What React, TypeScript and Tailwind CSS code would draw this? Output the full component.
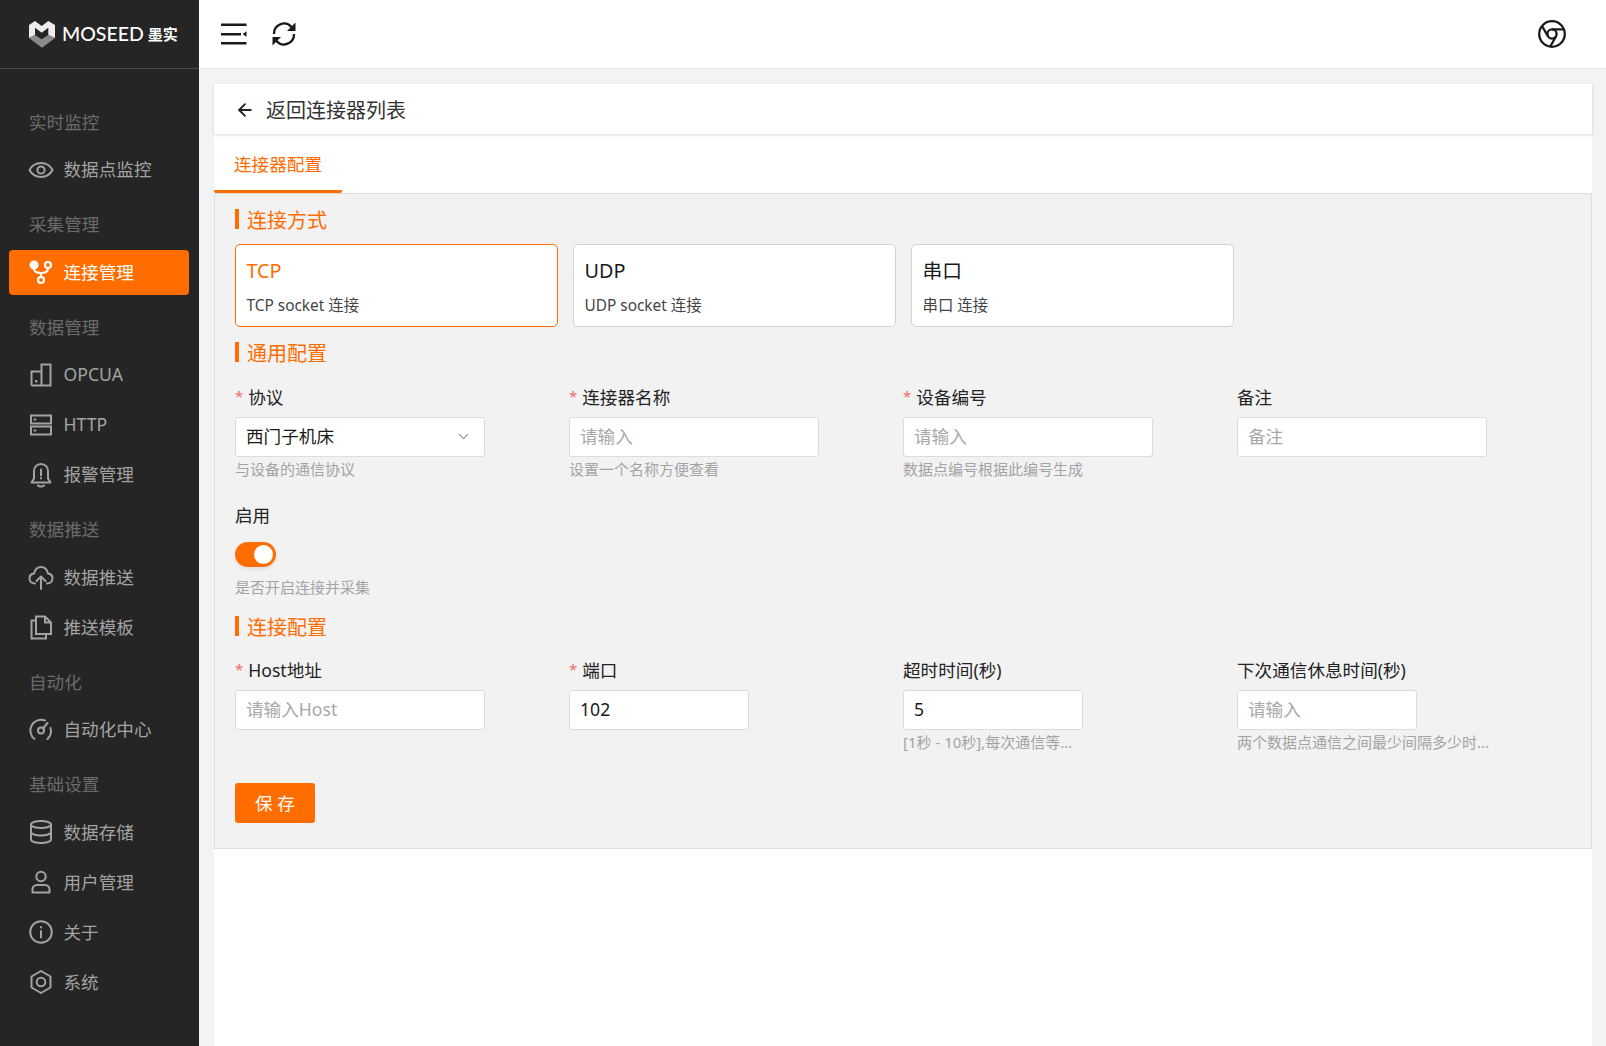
import { ChevronDown, ArrowLeft } from 'lucide-react'
import type { ReactNode } from 'react'

const ic = {
  fill: 'none',
  stroke: 'currentColor',
  strokeWidth: 2,
  strokeLinecap: 'round' as const,
  strokeLinejoin: 'round' as const,
}

const icons: Record<string, ReactNode> = {
  eye: (
    <svg width="26" height="26" viewBox="0 0 26 26" {...ic}>
      <path d="M1.5 13C4 8.300 8 6 13 6s9 2.300 11.500 7C22 17.700 18 20 13 20S4 17.700 1.500 13Z" />
      <circle cx="13" cy="13" r="3.600" />
    </svg>
  ),
  link: (
    <svg width="26" height="26" viewBox="0 0 26 26" fill="none" stroke="currentColor" strokeWidth="2.200">
      <circle cx="6" cy="6" r="3.400" fill="currentColor" />
      <circle cx="20" cy="6" r="3" />
      <circle cx="13" cy="21" r="3" />
      <path d="M6 9c0 4 2 5 7 5s7-2 7-5M13 14v4" />
    </svg>
  ),
  opcua: (
    <svg width="26" height="26" viewBox="0 0 26 26" {...ic} strokeLinejoin="miter" strokeLinecap="butt">
      <path d="M3.500 23.500v-14l10-.01v14h-10ZM13.500 9.500v-7h9v21h-9" />
      <rect x="7" y="18" width="2.400" height="2.400" fill="currentColor" stroke="none" />
    </svg>
  ),
  http: (
    <svg width="26" height="26" viewBox="0 0 26 26" {...ic} strokeLinejoin="miter">
      <rect x="3" y="3.500" width="20" height="8" />
      <rect x="3" y="14.500" width="20" height="8" />
      <path d="M6.500 7.500h1M6.500 18.500h1" />
    </svg>
  ),
  bell: (
    <svg width="26" height="26" viewBox="0 0 26 26" {...ic}>
      <path d="M13 2c-4.500 0-7 3.300-7 7.500v7L3.500 20.500h19L20 16.500v-7C20 5.300 17.500 2 13 2Z" />
      <path d="M10 23.500c1.500 1.300 4.500 1.300 6 0M13 7.500v6M13 16v.6" />
    </svg>
  ),
  cloud: (
    <svg width="26" height="26" viewBox="0 0 26 26" {...ic}>
      <path d="M7 19.500c-3.500 0-5.500-2.200-5.500-5 0-2.700 2-4.700 4.500-5C7 5.500 9.700 3 13 3s6 2.500 7 6.500c2.500.3 4.500 2.300 4.500 5 0 2.800-2 5-5.500 5" />
      <path d="M13 25V12.500M8.500 17l4.500-4.500 4.500 4.500" />
    </svg>
  ),
  file: (
    <svg width="26" height="26" viewBox="0 0 26 26" {...ic} strokeLinejoin="miter" strokeLinecap="butt">
      <path d="M8 2.500h9l6 6v11.500H8V2.500ZM17 2.500v6h6" />
      <path d="M8 6.500H3.500v18H18V20" />
    </svg>
  ),
  gauge: (
    <svg width="26" height="26" viewBox="0 0 26 26" {...ic}>
      <path d="M17 3.400A10.800 10.800 0 0 0 6.500 22M19.500 22a10.800 10.800 0 0 0 3-11" />
      <circle cx="13" cy="13.500" r="3" />
      <path d="M15 11.500l4.500-5.500" />
    </svg>
  ),
  db: (
    <svg width="26" height="26" viewBox="0 0 26 26" {...ic}>
      <ellipse cx="13" cy="5.500" rx="10" ry="3.500" />
      <path d="M3 5.500v15c0 2 4.500 3.500 10 3.500s10-1.500 10-3.500v-15M3 13c0 2 4.500 3.500 10 3.500S23 15 23 13" />
    </svg>
  ),
  user: (
    <svg width="26" height="26" viewBox="0 0 26 26" {...ic}>
      <circle cx="13" cy="7.500" r="4.700" />
      <path d="M4.500 23.500v-3c0-2.500 2-4.500 4.500-4.500h8c2.500 0 4.500 2 4.500 4.500v3H4.500Z" />
    </svg>
  ),
  info: (
    <svg width="26" height="26" viewBox="0 0 26 26" {...ic}>
      <circle cx="13" cy="13" r="10.800" />
      <path d="M13 12v6.500M13 8v.5" />
    </svg>
  ),
  cog: (
    <svg width="26" height="26" viewBox="0 0 26 26" {...ic}>
      <path d="M13 2l9.500 5.500v11L13 24l-9.500-5.500v-11L13 2Z" />
      <circle cx="13" cy="13" r="4.300" />
    </svg>
  ),
}

const menu = [
  { title: '实时监控', items: [{ icon: 'eye', label: '数据点监控' }] },
  { title: '采集管理', items: [{ icon: 'link', label: '连接管理', active: true }] },
  {
    title: '数据管理',
    items: [
      { icon: 'opcua', label: 'OPCUA' },
      { icon: 'http', label: 'HTTP' },
      { icon: 'bell', label: '报警管理' },
    ],
  },
  {
    title: '数据推送',
    items: [
      { icon: 'cloud', label: '数据推送' },
      { icon: 'file', label: '推送模板' },
    ],
  },
  { title: '自动化', items: [{ icon: 'gauge', label: '自动化中心' }] },
  {
    title: '基础设置',
    items: [
      { icon: 'db', label: '数据存储' },
      { icon: 'user', label: '用户管理' },
      { icon: 'info', label: '关于' },
      { icon: 'cog', label: '系统' },
    ],
  },
]

function Logo() {
  return (
    <div className="flex items-center">
      <svg width="26" height="27" viewBox="0 0 26 27" className="mr-[7px]">
        <path d="M0 4l6-4 6.700 5 6.600-5L26 4v13l-6.700-3V6.700l-6.600 5-6.700-5V14L0 17V4Z" fill="#ececec" />
        <path d="M0 17l6-3 6.700 4.300L19.300 14l6.700 3-13 9.700L0 17Z" fill="#8a8a8a" />
      </svg>
      <span className="text-[19.5px] leading-none text-white font-medium font-['Lato',sans-serif]">MOSEED</span>
      <span className="ml-[4px] text-[15px] leading-none text-white font-bold">墨实</span>
    </div>
  )
}

function Sidebar() {
  return (
    <aside className="w-[199px] shrink-0 bg-[#252525] flex flex-col">
      <div className="h-[69px] shrink-0 border-b border-[#4a4a4a] pl-[29px] flex items-center">
        <Logo />
      </div>
      <nav className="pt-[20.5px]">
        {menu.map((g) => (
          <div key={g.title} className="mt-[10.5px]">
            <div className="h-[44px] mb-[3px] pl-[29px] flex items-center text-[17.6px] text-[#6b6b6b]">{g.title}</div>
            {g.items.map((it) => (
              <div
                key={it.label}
                className={
                  it.active
                    ? 'ml-[9px] w-[180px] h-[45px] mb-[5px] rounded-[4px] bg-[#ff6d00] text-white flex items-center pl-[19px] gap-[9.5px] text-[17.6px]'
                    : 'ml-[9px] w-[180px] h-[45px] mb-[5px] rounded-[4px] text-[#a3a3a3] flex items-center pl-[19px] gap-[9.5px] text-[17.6px]'
                }
              >
                {icons[it.icon]}
                <span>{it.label}</span>
              </div>
            ))}
          </div>
        ))}
      </nav>
    </aside>
  )
}

function SectionTitle({ children }: { children: ReactNode }) {
  return (
    <div className="h-[20px] flex items-center border-l-[4px] border-[#ff6d00] pl-[8px] pt-[3px] text-[20px] text-[#ff6d00]">
      {children}
    </div>
  )
}

function ConnCard({ title, desc, active }: { title: string; desc: string; active?: boolean }) {
  return (
    <div
      className={
        active
          ? 'w-[322.5px] h-[83px] bg-white rounded-[5px] border border-[#ff6d00] pl-[10.5px]'
          : 'w-[322.5px] h-[83px] bg-white rounded-[5px] border border-[#d0d2da] pl-[10.5px]'
      }
    >
      <div className={active ? 'mt-[12px] h-[28px] leading-[28px] text-[19.8px] text-[#ff6d00]' : 'mt-[12px] h-[28px] leading-[28px] text-[19.8px] text-[#1a1a1a]'}>
        {title}
      </div>
      <div className="mt-[10px] h-[22px] leading-[22px] text-[15.4px] text-[#444]">{desc}</div>
    </div>
  )
}

function Field({
  label,
  required,
  placeholder,
  value,
  hint,
  width = 'w-[250px]',
  select,
}: {
  label: string
  required?: boolean
  placeholder?: string
  value?: string
  hint?: string
  width?: string
  select?: boolean
}) {
  return (
    <div>
      <div className="h-[24px] leading-[24px] text-[17.6px] text-[#222] mb-[8px] flex items-center">
        {required && <span className="text-[#f56c6c] text-[15px] mr-[5px] -mt-[2px]">*</span>}
        <span>{label}</span>
      </div>
      <div className={`${width} h-[40px] bg-white rounded-[3px] border border-[#dcdcdc] pl-[10px] pr-[12px] pb-[2px] flex items-center justify-between text-[17.6px]`}>
        {value ? <span className="text-[#1a1a1a]">{value}</span> : <span className="text-[#a8a8a8]">{placeholder}</span>}
        {select && <ChevronDown size={17} strokeWidth={1.5} className="text-[#8c8c8c]" />}
      </div>
      {hint && <div className="mt-[1px] h-[22px] leading-[22px] whitespace-nowrap text-[15px] text-[#a3a3a3]">{hint}</div>}
    </div>
  )
}

export default function App() {
  return (
    <div className="w-full h-[1046px] flex overflow-hidden font-['Noto_Sans','Noto_Sans_CJK_SC',sans-serif] bg-[#f2f3f5]">
      <Sidebar />
      <div className="flex-1 flex flex-col min-w-0">
        {/* Header */}
        <header className="h-[69px] shrink-0 bg-white border-b border-[#e6e7ea] flex items-center justify-between pl-[22px] pr-[40px]">
          <div className="flex items-center gap-[24px]">
            <svg width="26" height="22" viewBox="0 0 26 22" className="text-[#1a1a1a]" fill="currentColor">
              <rect x="0" y="0.500" width="25.500" height="2.500" />
              <rect x="0" y="10" width="20" height="2.500" />
              <path d="M25.500 8.200v5.800l-3.800-2.900 3.800-2.900Z" />
              <rect x="0" y="19" width="25.500" height="2.500" />
            </svg>
            <svg width="26" height="26" viewBox="0 0 26 26" fill="none" stroke="#1a1a1a" strokeWidth="2.300">
              <path d="M3 13a10 10 0 0 1 17.500-7l2 2.500" />
              <path d="M23 13a10 10 0 0 1-17.500 7l-2-2.500" />
              <path d="M24.500 1.500v8.500h-8.500l8.500-8.500Z" fill="#1a1a1a" stroke="none" />
              <path d="M1.500 24.500v-8.500h8.500l-8.500 8.500Z" fill="#1a1a1a" stroke="none" />
            </svg>
          </div>
          <svg width="28" height="28" viewBox="0 0 28 28" fill="none" stroke="#1a1a1a" strokeWidth="2.300">
            <circle cx="14" cy="14" r="12.800" />
            <circle cx="14" cy="14" r="4.600" />
            <path d="M14 9.400h11.500M18 16.300l-5.800 10.500M10 16.300L4 6" />
          </svg>
        </header>

        {/* Content */}
        <main className="flex-1 mt-[15px] ml-[15px] mr-[14px] bg-white flex flex-col">
          <div className="h-[50px] shrink-0 bg-white shadow-[0_1px_3px_rgba(0,0,0,0.15)] flex items-center pl-[21px] text-[20px] text-[#333] relative">
            <ArrowLeft size={20} strokeWidth={2.2} className="mr-[11px] mt-[2px] text-[#222]" />
            <span className="pt-[3px]">返回连接器列表</span>
          </div>

          <div className="h-[59px] shrink-0 relative">
            <div className="w-[128px] h-[59px] text-[17.6px] text-[#ff6d00] text-center leading-[61px] border-b-[3px] border-[#ff6d00] rounded-b-[2px]">
              连接器配置
            </div>
          </div>

          <div className="h-[656px] shrink-0 bg-[#f2f2f3] border border-[#dedede] px-[20px] pt-[15px]">
            <SectionTitle>连接方式</SectionTitle>
            <div className="mt-[15px] flex gap-[15.5px]">
              <ConnCard title="TCP" desc="TCP socket 连接" active />
              <ConnCard title="UDP" desc="UDP socket 连接" />
              <ConnCard title="串口" desc="串口 连接" />
            </div>

            <div className="mt-[15px]">
              <SectionTitle>通用配置</SectionTitle>
            </div>
            <div className="mt-[23px] grid grid-cols-4">
              <Field label="协议" required value="西门子机床" hint="与设备的通信协议" select />
              <Field label="连接器名称" required placeholder="请输入" hint="设置一个名称方便查看" />
              <Field label="设备编号" required placeholder="请输入" hint="数据点编号根据此编号生成" />
              <Field label="备注" placeholder="备注" />
            </div>

            <div className="mt-[23px] h-[24px] leading-[24px] text-[17.6px] text-[#222]">启用</div>
            <div className="mt-[15px] w-[41px] h-[25px] rounded-full bg-[#ff6d00] relative shadow-[0_2px_4px_rgba(0,0,0,0.08)]">
              <div className="absolute right-[3px] top-[3px] w-[19px] h-[19px] rounded-full bg-white" />
            </div>
            <div className="mt-[9px] h-[22px] leading-[22px] text-[15px] text-[#a3a3a3]">是否开启连接并采集</div>

            <div className="mt-[18px]">
              <SectionTitle>连接配置</SectionTitle>
            </div>
            <div className="mt-[22px] grid grid-cols-4">
              <Field label="Host地址" required placeholder="请输入Host" />
              <Field label="端口" required value="102" width="w-[180px]" />
              <Field label="超时时间(秒)" value="5" width="w-[180px]" hint="[1秒 - 10秒],每次通信等..." />
              <Field label="下次通信休息时间(秒)" placeholder="请输入" width="w-[180px]" hint="两个数据点通信之间最少间隔多少时..." />
            </div>

            <button className="mt-[30px] block w-[80px] h-[40px] rounded-[3px] bg-[#ff6d00] text-white text-[17.6px]">保 存</button>
          </div>
        </main>
      </div>
    </div>
  )
}
